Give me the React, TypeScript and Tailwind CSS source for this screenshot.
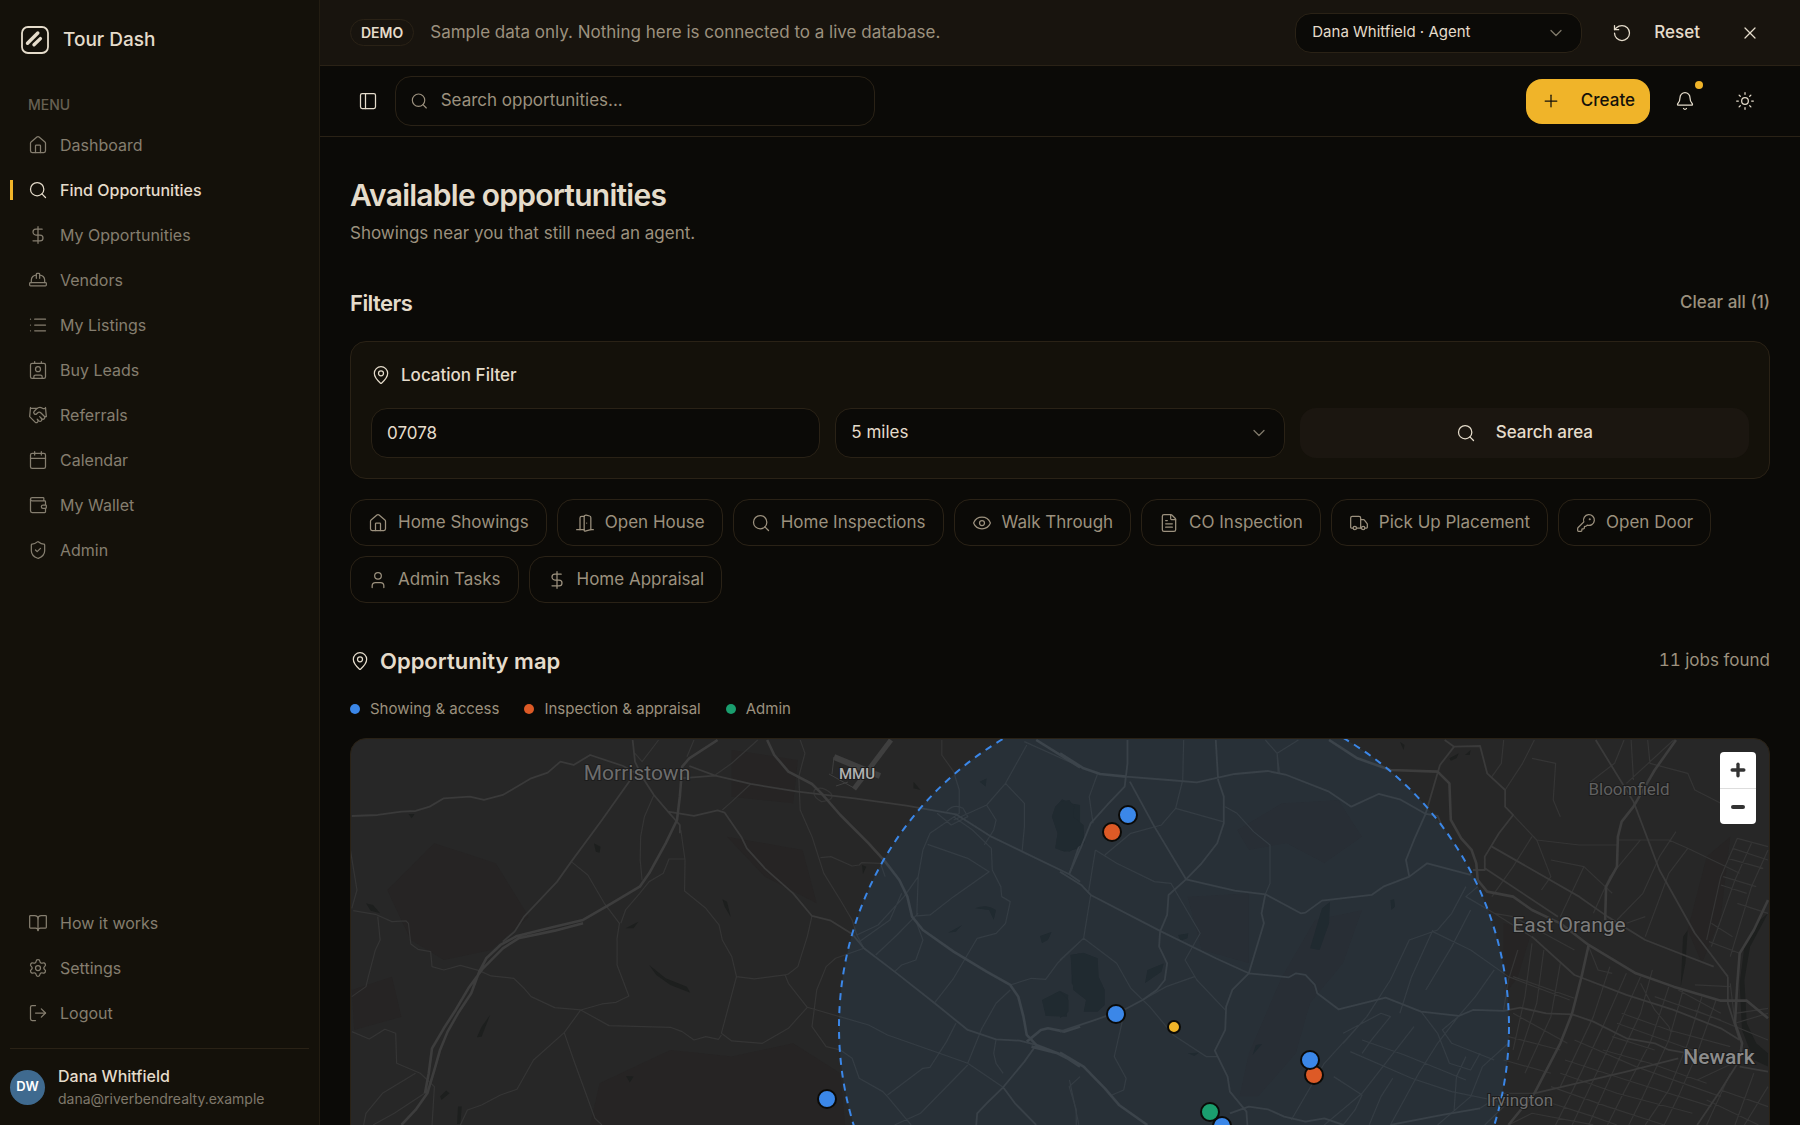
import {
  Bell,
  BookOpen,
  Calendar,
  ChevronDown,
  Contact,
  DollarSign,
  DoorOpen,
  Eye,
  FileText,
  Handshake,
  HardHat,
  House,
  KeyRound,
  List,
  LogOut,
  MapPin,
  PanelLeft,
  Plus,
  RotateCcw,
  Search,
  Settings,
  ShieldCheck,
  Sun,
  Truck,
  User,
  Wallet,
  X,
} from "lucide-react";

const menu = [
  { label: "Dashboard", icon: House },
  { label: "Find Opportunities", icon: Search, active: true },
  { label: "My Opportunities", icon: DollarSign },
  { label: "Vendors", icon: HardHat },
  { label: "My Listings", icon: List },
  { label: "Buy Leads", icon: Contact },
  { label: "Referrals", icon: Handshake },
  { label: "Calendar", icon: Calendar },
  { label: "My Wallet", icon: Wallet },
  { label: "Admin", icon: ShieldCheck },
];

const footerMenu = [
  { label: "How it works", icon: BookOpen },
  { label: "Settings", icon: Settings },
  { label: "Logout", icon: LogOut },
];

const jobTypes = [
  { label: "Home Showings", icon: House },
  { label: "Open House", icon: DoorOpen },
  { label: "Home Inspections", icon: Search },
  { label: "Walk Through", icon: Eye },
  { label: "CO Inspection", icon: FileText },
  { label: "Pick Up Placement", icon: Truck },
  { label: "Open Door", icon: KeyRound },
  { label: "Admin Tasks", icon: User },
  { label: "Home Appraisal", icon: DollarSign },
];

const legend = [
  { label: "Showing & access", dot: "bg-[#3b87e8]" },
  { label: "Inspection & appraisal", dot: "bg-[#dd5a26]" },
  { label: "Admin", dot: "bg-[#1a9e6e]" },
];

const markers = [
  { x: 777, y: 76, color: "#3b87e8" },
  { x: 761, y: 93, color: "#dd5a26" },
  { x: 765, y: 275, color: "#3b87e8" },
  { x: 963, y: 336, color: "#dd5a26" },
  { x: 959, y: 321, color: "#3b87e8" },
  { x: 871, y: 387, color: "#3b87e8" },
  { x: 859, y: 373, color: "#1a9e6e" },
  { x: 476, y: 360, color: "#3b87e8" },
];

const places = [
  { name: "Morristown", x: 286, y: 41, size: 21, weight: 400, color: "#6d6d6d" },
  { name: "MMU", x: 506, y: 40, size: 15, weight: 500, color: "#b0b0b0" },
  { name: "Bloomfield", x: 1278, y: 56, size: 17, weight: 400, color: "#606060" },
  { name: "East Orange", x: 1218, y: 193, size: 21, weight: 400, color: "#7c7c7c" },
  { name: "Newark", x: 1368, y: 325, size: 21, weight: 500, color: "#8c8c8c" },
  { name: "Irvington", x: 1169, y: 367, size: 17, weight: 400, color: "#6d6d6d" },
];

// Roads are stored per map tile, in the tile's own 1568 x 1485 grid.
const westMajor = [
  "M800 330L740 385L725 410L720 500L714 570L690 640L655 730L635 770L570 825L515 870L450 892L375 918L340 945L310 985L295 1025L278 1090L250 1150L228 1205L212 1260L200 1320L185 1390L160 1440L130 1485",
  "M515 880L455 902L378 925L345 955L303 1015L272 1075L245 1140L220 1195L195 1255L188 1330L180 1390",
  "M905 330L920 375L950 425L1000 462L1020 490L1060 555L1120 640L1155 695L1185 750L1202 800L1212 860L1235 900L1300 965L1370 1025L1420 1065L1437 1100L1448 1160L1455 1215L1475 1245L1530 1275L1568 1310",
  "M1475 330L1568 412",
  "M1455 1235L1485 1200L1500 1195L1535 1205L1568 1190",
  "M1465 1250L1520 1270L1568 1305",
];

const westRoads = [
  "M615 450L555 570L490 695L460 755L390 860L370 905L345 935",
  "M25 558L80 555L130 545L160 543L190 530L220 505L275 500L305 510L345 495L405 445L440 428L467 395L495 405L530 375L600 408L640 440",
  "M620 330L625 395L640 440L665 495L695 545L720 585L720 610",
  "M740 408L795 437L870 462L970 485L1090 505L1200 527L1305 553L1380 620L1450 668L1545 733L1568 755",
  "M695 545L750 558L800 541L815 548L850 620L862 655L900 715L960 790L1000 858L1040 872L1085 912L1110 955L1175 1025L1260 1120L1330 1200L1390 1228L1440 1232L1475 1245",
  "M1475 1245L1450 1295L1405 1372L1370 1420L1350 1450L1348 1485M1405 1372L1430 1420L1475 1485",
  "M1545 733L1568 640",
  "M720 445L795 437",
];

const westMinor = [
  "M722 600L731 690L730 783L775 835L803 885L810 930L830 980L840 1040L825 1120L808 1210L830 1233L895 1240L950 1195L990 1132L950 1060L943 1035L878 1047L840 1040",
  "M1000 858L990 920L970 1010L950 1032L943 1035",
  "M490 695L525 735L560 820L592 880L587 925L587 1005L612 1098L585 1117L555 1122L510 1140L570 1187L700 1192L725 1205L750 1230L775 1220L802 1228L808 1215",
  "M510 1140L455 1133L405 1100L390 1075L368 1045L320 1038L295 1022L255 1006L220 1020L195 1010L192 965L165 958L150 942L145 880L140 873L110 875L75 853L28 842",
  "M510 1140L475 1208L410 1290L375 1378L340 1395L300 1425L270 1440L255 1485",
  "M475 1208L495 1290L540 1465L555 1485",
  "M22 660L36 780L25 835M80 860L85 930L75 960L60 1040L55 1070L25 1100",
  "M25 1205L62 1227L95 1198L118 1210L120 1300L170 1330L200 1370L195 1485M160 1330L90 1390L55 1450L50 1485M185 1385L115 1450L70 1485",
  "M885 330L830 400L795 435M870 462L830 515L810 540",
  "M675 330L640 395L625 370M750 330L735 380",
  "M665 495L645 560L637 620L636 690L640 750M635 790L655 755L685 730L697 687L730 687M635 790L605 840L595 880",
  "M975 330L985 370L972 440L975 540L1000 620L1025 730L1060 810L1085 870L1095 915L1110 955",
  "M1018 683L1040 680L1085 708L1100 705L1105 698L1145 700L1155 740",
  "M1110 955L1050 985L1030 1010L1010 1080L1000 1190L1030 1250L1060 1260L1085 1285L1100 1345L1150 1385L1160 1400L1210 1485",
  "M990 1132L1120 1185L1160 1215L1240 1255L1330 1300L1405 1372",
  "M1275 330L1275 375L1300 425L1312 480L1312 550L1250 610L1235 660L1225 740L1195 800L1140 885L1095 915",
  "M1160 1395L1235 1315L1250 1312L1285 1235L1305 1180",
  "M1390 1228L1385 1270L1390 1300L1405 1330",
  "M1225 740L1222 858L1250 855L1300 800L1375 725L1330 685L1245 643",
  "M1300 570L1370 525L1410 460L1455 345M1410 460L1450 520L1450 590L1445 665",
  "M1370 525L1390 570L1385 600L1365 645",
  "M1175 1025L1190 1005L1220 990L1235 930L1222 880M1135 975L1180 915L1225 850M1100 935L1165 870L1190 790",
  "M1300 560L1340 600L1380 655L1382 720L1400 770L1402 800L1420 815L1410 880L1390 910L1350 925L1325 985L1300 1045L1260 1118",
  "M1420 1065L1465 1045L1495 1048L1520 1000L1568 935M1420 1080L1390 1120L1360 1195L1330 1300",
  "M1568 1340L1545 1370L1560 1440L1560 1485M1175 1485L1230 1450L1330 1305",
  "M1450 335L1568 410",
  "M1005 480Q1020 465 1040 490Q1050 510 1020 515Q1000 500 1005 480",
  "M1285 545Q1300 520 1320 535L1330 560L1295 585L1265 550",
];

const westWater = [
  "M1515 530L1530 508L1548 520L1568 525L1568 655L1535 665L1515 655L1520 610L1508 560Z",
  "M1487 1110L1525 1082L1543 1095L1540 1160L1495 1158Z",
  "M1568 970L1550 975L1550 1060L1568 1090Z",
  "M318 1155L300 1190L290 1222L300 1220Z",
  "M538 640L552 650L550 668L542 665Z",
  "M655 1005L690 1045L735 1070L742 1088L700 1065L670 1035Z",
  "M55 820L70 825L85 850L65 842Z",
  "M810 808L820 815L828 862L815 830Z",
  "M606 1338L622 1340L614 1358Z",
  "M1288 908L1318 885L1305 905Z",
  "M1483 918L1508 905L1500 930L1487 940Z",
  "M1345 835Q1370 820 1390 840L1385 870L1375 840Z",
  "M1355 455L1370 445L1368 470Z",
  "M1215 455L1230 480L1215 475Z",
  "M605 895L632 875L622 895Z",
  "M145 552L158 552L152 565Z",
  "M212 1400L225 1382L232 1390L215 1410Z",
  "M250 1430L258 1430L255 1482L248 1482Z",
  "M1106 705L1115 710L1108 732Z",
];

const westPatches = [
  "M200 640L330 700L400 860L320 960L220 990L150 930L100 780Z",
  "M550 1360L700 1260L830 1280L960 1240L1060 1330L1070 1485L530 1485Z",
  "M830 360L970 390L960 520L830 500Z",
  "M820 620L980 660L1010 820L900 740Z",
  "M25 1080L110 1040L130 1160L30 1200Z",
];

const eastMajor = [
  "M0 370L50 415L85 432L140 440",
  "M570 330L630 385L700 420L800 425L825 460L828 570L850 625L872 660L882 700L885 750L905 785L960 800L1000 840L1060 880L1120 945L1220 1030L1300 1070L1400 1112L1455 1112L1500 1165",
  "M1305 330L1260 420L1215 530L1190 575L1182 620L1180 710L1157 770L1155 870",
  "M1120 945L1105 1040L1085 1150L1060 1240L1005 1390L950 1485",
  "M0 1268L50 1310L95 1375L125 1425L185 1485",
  "M1500 810L1470 900L1440 970L1435 1060L1430 1180L1445 1240L1440 1290",
];

const eastRoads = [
  "M140 440L230 450L290 457L370 432L440 423L480 435L570 485L617 530L675 492L720 508L775 552L800 558L810 590",
  "M143 330L143 400L137 470L100 525L65 580L45 650L20 730",
  "M330 330L335 450L347 500L347 580L333 640L300 700L267 748L230 795L227 855L212 905L210 950L227 1000L222 1050L205 1080L175 1110L135 1140L70 1172L0 1205",
  "M148 455L200 590L267 748L370 782L435 793L510 850L520 848L555 812L660 795L685 770L740 740L778 700L870 735",
  "M0 725L45 765L65 795L215 905L330 985L400 1030L485 1042L500 1030L520 1035L540 1065L545 1090L590 1138L690 1103L765 1145L845 1158L875 1140L940 1143L975 1133L1030 1150L1085 1153L1130 1175L1200 1225L1260 1240L1290 1260L1350 1275",
  "M435 793L427 850L432 880L400 1030L365 1080L352 1130L350 1200L328 1262L355 1340L360 1385L395 1445L397 1485",
  "M835 350L890 348L905 430L943 480L943 530L960 555L930 610L900 680L900 720L875 720M835 350L805 405L775 550L750 630L733 690L740 740",
  "M1135 330L1215 515L1270 720L1345 910L1415 1040",
  "M915 650L1020 735L1100 800L1160 860L1240 930L1385 1010M900 715L1055 860",
  "M1000 920L1090 1035L1200 1095L1300 1140L1400 1195L1440 1230",
  "M1005 1390L1200 1325L1310 1285",
  "M700 1485L810 1455L890 1435M360 1450L400 1430L440 1438L475 1460L520 1475L560 1465L600 1485",
  "M1440 1290L1400 1380L1350 1485M1440 1310L1500 1325",
  "M1415 1040L1415 1120L1440 1230",
  "M815 330L835 350",
];

const eastMinor = [
  "M350 530L375 550L410 605L445 645L445 760L435 793M245 535L345 575M75 660L120 700L200 755L235 760L297 910L265 990L290 1050L350 1140",
  "M95 675L150 610L215 585L245 535L260 450L262 330M80 430L62 500L70 580M75 660L60 790",
  "M65 795L50 925L120 1000L150 1075L190 1130L240 1215L310 1280L333 1280M175 1110L225 1070L285 1040M50 925L0 990",
  "M135 1155L115 1280L140 1345L135 1380L110 1395M20 1350L40 1485",
  "M460 370L465 430M460 370L505 330M460 370L435 330M460 370L462 430",
  "M860 770L830 850L800 900L740 930L700 1050L650 1160L560 1300L490 1470M885 770L860 800L920 850L1010 930",
  "M790 905L870 960L950 1040L1080 1110M920 1020L880 1100L845 1158L800 1240L760 1330L700 1485",
  "M600 1210L680 1150L700 1160L660 1230L640 1270M615 1265L745 1345L830 1385L950 1420M640 1230L730 1275L860 1350",
  "M765 1145L800 1210L825 1300L870 1320L890 1270M845 1158L810 1200L830 1240L920 1290",
  "M580 1340L640 1395L625 1440L600 1485M705 1345L680 1400L655 1485M860 1280L840 1340L835 1440",
  "M775 1080L830 950L870 840M720 1150L745 1040L790 900M650 1160L600 1240",
  "M940 330L935 400L915 440M1005 330L980 400L943 480M1000 385L1050 400L1045 510L1060 560",
  "M1195 330L1175 400L1120 460M1245 330L1250 400L1330 430L1345 480L1400 520M1210 330L1215 450",
  "M1180 630L1290 630L1330 655L1440 730M1180 645L1100 645L1010 630M1305 605L1270 680L1235 790L1180 870",
  "M960 555L1010 630L1040 740L1020 780M1040 690L1110 710L1170 790M1000 620L960 710L915 800",
  "M1330 655L1290 730L1240 920M1110 710L1060 860M1240 860L1200 880M1230 630L1165 740L1130 850",
  "M1435 625L1400 740L1370 930M1465 640L1430 750L1380 950M1500 660L1465 770L1420 980M1435 625L1500 650M1425 655L1500 690M1415 685L1490 715",
  "M1405 740L1475 770M1400 765L1455 790M1435 820L1500 850M1380 880L1425 920M1375 935L1440 970M1300 330L1200 460",
  "M920 850L960 860L1090 960M970 960L950 1050L940 1140M1000 940L985 1100L960 1260M1025 960L1010 1120L970 1290M1060 1000L1040 1160L985 1330",
  "M960 1040L1090 1105M960 1150L1075 1240M950 1220L1060 1260M940 1290L1040 1330M1120 950L1140 1020L1170 1030",
  "M1230 1040L1180 1200L1120 1380L1085 1485M1200 1030L1150 1190L1090 1370L1050 1485M1255 1020L1230 1150L1170 1330L1120 1485M1165 1010L1130 1160L1060 1370",
  "M1290 1070L1250 1240L1190 1400L1160 1485M1320 1080L1290 1230L1235 1400L1205 1485M1360 1100L1330 1240L1290 1380L1240 1485M1390 1110L1350 1270L1310 1400L1280 1485",
  "M1190 1150L1290 1200L1420 1250M1180 1180L1280 1230L1400 1290M1170 1220L1260 1260M1150 1260L1250 1300L1370 1360M1090 1230L1220 1310L1400 1400",
  "M1070 1290L1200 1350L1380 1430M1060 1330L1180 1390L1340 1450M1040 1370L1160 1430L1280 1485M1020 1410L1130 1460L1180 1485M1310 1080L1400 1150M1345 1065L1420 1070M1260 1100L1400 1170",
  "M1230 1060L1260 1140L1290 1190L1295 1210M1400 1380L1500 1430M1370 1410L1480 1485M1420 1330L1370 1485M1470 1330L1430 1485M1500 1370L1450 1485",
  "M1430 1180L1500 1150M1430 1150L1500 1135M1420 1060L1430 1180M1440 1290L1350 1350M1345 1140L1500 1230",
  "M890 1435L940 1390L1005 1390M800 1485L870 1400L895 1310L950 1240M900 1485L940 1430M950 1485L1000 1450L1130 1485M560 1485L640 1390L750 1190",
];

const eastWater = [
  "M0 515L20 510L30 530L28 560L50 585L52 640L20 665L0 660Z",
  "M22 975L50 968L80 985L82 1040L95 1080L95 1125L80 1145L50 1145L55 1110L28 1080Z",
  "M0 1085L18 1110L18 1145L0 1165Z",
  "M555 835L572 815L570 880L550 960L530 955Z",
  "M700 810L708 808L710 830L702 840Z",
  "M180 1060L185 1020L220 1000L215 1025Z",
  "M250 915L272 910L270 925L255 932Z",
  "M408 1275L415 1245L428 1242Z",
  "M270 1270L295 1268L285 1278Z",
  "M825 385L845 370L840 385L828 392ZM858 375L870 360L868 375Z",
  "M1320 920L1330 900L1325 1000L1315 1070Z",
  "M1500 850L1462 950L1450 1050L1455 1180L1475 1240L1500 1270L1500 1310L1470 1290L1445 1200L1440 1060L1450 950L1475 880Z",
  "M720 335L730 345L728 360Z",
];

const eastPatches = [
  "M375 600L470 520L590 510L640 620L560 700L480 640L400 660Z",
  "M270 800L400 790L400 1000L300 960Z",
  "M470 1040L540 870L640 840L600 1000L530 1120L500 1270L420 1400L380 1400L400 1270Z",
  "M940 880L1000 900L970 1040L940 1100Z",
  "M1370 680L1420 620L1400 860L1360 1000L1330 900Z",
];

type Tile = {
  transform: string;
  patches: string[];
  water: string[];
  minor: string[];
  roads: string[];
  major: string[];
};

function MapTile({ transform, patches, water, minor, roads, major }: Tile) {
  return (
    <g transform={transform} strokeLinejoin="round">
      <path d={patches.join("")} fill="#262424" />
      <path d={water.join("")} fill="#1d1f1e" />
      <g fill="none">
        <path
          d={minor.join("")}
          stroke="#353535"
          strokeWidth="1.2"
          vectorEffect="non-scaling-stroke"
        />
        <path
          d={roads.join("")}
          stroke="#3a3a3a"
          strokeWidth="1.8"
          vectorEffect="non-scaling-stroke"
        />
        <path
          d={major.join("")}
          stroke="#3d3d3d"
          strokeWidth="2.6"
          vectorEffect="non-scaling-stroke"
        />
      </g>
    </g>
  );
}

function OpportunityMap() {
  return (
    <div className="relative h-[600px] overflow-hidden rounded-2xl border border-[#2a2216] bg-[#272727]">
      <svg
        className="h-full w-full"
        viewBox="0 0 1418 598"
        preserveAspectRatio="xMidYMin slice"
        role="img"
        aria-label="Map of opportunities around 07078"
      >
        <MapTile
          transform="translate(-11 -109) scale(0.472 0.3333)"
          patches={westPatches}
          water={westWater}
          minor={westMinor}
          roads={westRoads}
          major={westMajor}
        />
        <MapTile
          transform="translate(709 -109) scale(0.472 0.3333)"
          patches={eastPatches}
          water={eastWater}
          minor={eastMinor}
          roads={eastRoads}
          major={eastMajor}
        />
        {/* Airport runways */}
        <g stroke="#3f3f3f" fill="none">
          <path d="M540 1L503 50" strokeWidth="5" />
          <path d="M483 18L529 37" strokeWidth="6" />
          <path d="M483 18L481 35M478 35L503 49M485 47L497 43" />
        </g>
        {/* Search radius */}
        <circle
          cx="823"
          cy="288"
          r="335"
          fill="#3973a8"
          fillOpacity="0.13"
          stroke="#3b87e8"
          strokeWidth="2"
          strokeDasharray="7 6"
        />
        {places.map((p) => (
          <text
            key={p.name}
            x={p.x}
            y={p.y}
            textAnchor="middle"
            fontSize={p.size}
            fontWeight={p.weight}
            fill={p.color}
            stroke="#1c1c1c"
            strokeWidth="2"
            paintOrder="stroke"
            className="font-['Roboto',sans-serif]"
          >
            {p.name}
          </text>
        ))}
        {markers.map((m) => (
          <circle
            key={`${m.x}-${m.y}`}
            cx={m.x}
            cy={m.y}
            r="9"
            fill={m.color}
            stroke="#0b0a07"
            strokeWidth="2"
          />
        ))}
        <circle cx="823" cy="288" r="6" fill="#f0b429" stroke="#0b0a07" strokeWidth="2" />
      </svg>
      <div className="absolute top-[13px] right-[13px] flex w-9 flex-col overflow-hidden rounded bg-white text-[#333]">
        <button aria-label="Zoom in" className="flex h-9 items-center justify-center">
          <Plus size={20} strokeWidth={4} />
        </button>
        <button
          aria-label="Zoom out"
          className="flex h-9 items-center justify-center border-t border-[#ddd]"
        >
          <span className="h-1 w-[14px] rounded-full bg-[#333]" />
        </button>
      </div>
    </div>
  );
}

function NavItem({ label, icon: Icon, active }: (typeof menu)[number]) {
  return (
    <a
      href="#"
      aria-current={active ? "page" : undefined}
      className={
        active
          ? "relative flex h-[45px] items-center gap-3 px-7 font-medium text-[#e5dccb]"
          : "relative flex h-[45px] items-center gap-3 px-7 text-[#857e6f]"
      }
    >
      {active && <span className="absolute left-[10px] h-5 w-[3px] bg-[#f0b429]" />}
      <Icon size={20} strokeWidth={1.5} />
      {label}
    </a>
  );
}

function Sidebar() {
  return (
    <aside className="flex w-80 shrink-0 flex-col border-r border-[#231d12] bg-[#14110a] text-base">
      <div className="flex items-center gap-[14px] px-[21px] pt-[26px] text-[19px] leading-7 font-medium text-[#e5dccb]">
        <svg width="28" height="28" viewBox="0 0 28 28" fill="none" stroke="currentColor">
          <rect x="1" y="1" width="26" height="26" rx="6" strokeWidth="1.8" />
          <path d="M6.5 17.2L16.8 7" strokeWidth="3.4" strokeLinecap="round" />
          <path d="M13 18.8L19.4 12.6" strokeWidth="3.4" strokeLinecap="round" />
        </svg>
        Tour Dash
      </div>
      <p className="mt-[41px] px-7 text-sm leading-5 font-medium text-[#676052]">MENU</p>
      <nav className="mt-[7px] flex flex-col">
        {menu.map((item) => (
          <NavItem key={item.label} {...item} />
        ))}
      </nav>
      <nav className="mt-auto flex flex-col">
        {footerMenu.map((item) => (
          <NavItem key={item.label} {...item} />
        ))}
      </nav>
      <div className="mx-[10px] mt-[13px] flex items-center gap-[13px] border-t border-[#2a2216] py-[15px]">
        <span className="flex h-[35px] w-[35px] items-center justify-center rounded-full bg-[#3f6a8f] text-[13px] font-semibold text-white">
          DW
        </span>
        <div>
          <p className="leading-6 font-medium text-[#e5dccb]">Dana Whitfield</p>
          <p className="text-sm leading-[22px] text-[#7f786a]">dana@riverbendrealty.example</p>
        </div>
      </div>
    </aside>
  );
}

export default function App() {
  return (
    <div className="flex h-screen bg-[#0b0a07] font-['Inter',sans-serif] text-[17px] text-[#e5dccb]">
      <Sidebar />
      <div className="flex min-w-0 flex-1 flex-col">
        {/* Demo banner */}
        <div className="flex h-[66px] shrink-0 items-center border-b border-[#2a2216] bg-[#18140e] px-[30px]">
          <span className="rounded-full border border-[#2a2216] px-[10px] text-sm leading-[25px] font-semibold">
            DEMO
          </span>
          <p className="ml-4 text-[#9c917e]">
            Sample data only. Nothing here is connected to a live database.
          </p>
          <div className="relative ml-auto w-[287px]">
            <select
              aria-label="Demo account"
              className="h-10 w-full appearance-none rounded-2xl border border-[#2a2216] bg-[#0b0a07] px-4 text-[15px]"
            >
              <option>Dana Whitfield · Agent</option>
            </select>
            <ChevronDown
              size={20}
              strokeWidth={1.5}
              className="pointer-events-none absolute top-[10px] right-4 text-[#7f786a]"
            />
          </div>
          <button className="ml-[30px] flex items-center gap-[22px] font-medium">
            <RotateCcw size={20} strokeWidth={1.5} />
            Reset
          </button>
          <button aria-label="Dismiss banner" className="ml-10 pr-[10px]">
            <X size={20} strokeWidth={1.5} />
          </button>
        </div>

        {/* Top bar */}
        <header className="flex h-[71px] shrink-0 items-center border-b border-[#2a2216] px-[30px]">
          <button aria-label="Toggle sidebar" className="flex w-[35px] justify-center">
            <PanelLeft size={20} strokeWidth={1.5} />
          </button>
          <label className="ml-[10px] flex h-[50px] w-[480px] items-center gap-3 rounded-2xl border border-[#2a2216] px-[14px] text-[#9c917e]">
            <Search size={20} strokeWidth={1.5} />
            <input
              type="search"
              aria-label="Search opportunities"
              placeholder="Search opportunities..."
              className="w-full bg-transparent outline-none placeholder:text-[#9c917e]"
            />
          </label>
          <button className="ml-auto flex h-[45px] items-center gap-5 rounded-2xl bg-[#f0b429] px-[15px] font-medium text-[#14110a]">
            <Plus size={20} strokeWidth={1.5} />
            Create
          </button>
          <button
            aria-label="Notifications"
            className="relative ml-[10px] flex h-[45px] w-[50px] items-center justify-center"
          >
            <Bell size={20} strokeWidth={1.5} />
            <span className="absolute top-[2px] right-[7px] h-2 w-2 rounded-full bg-[#f0b429]" />
          </button>
          <button
            aria-label="Toggle theme"
            className="ml-[10px] flex h-[45px] w-[50px] items-center justify-center"
          >
            <Sun size={20} strokeWidth={1.5} />
          </button>
        </header>

        <main className="flex-1 overflow-y-auto px-[30px] pt-[38px] pb-10 [scrollbar-width:none]">
          <h1 className="text-[30px] leading-10 font-semibold tracking-tight">
            Available opportunities
          </h1>
          <p className="mt-1 leading-7 text-[#9c917e]">
            Showings near you that still need an agent.
          </p>

          <div className="mt-10 flex items-center justify-between">
            <h2 className="text-[22px] leading-8 font-semibold tracking-tight">Filters</h2>
            <button className="font-medium text-[#9c917e]">Clear all (1)</button>
          </div>

          <section className="mt-[22px] rounded-2xl border border-[#2a2216] bg-[#14110a] p-5">
            <h3 className="flex items-center gap-[10px] leading-[26px] font-medium">
              <MapPin size={20} strokeWidth={1.5} />
              Location Filter
            </h3>
            <div className="mt-5 grid grid-cols-3 gap-[15px]">
              <input
                type="text"
                aria-label="ZIP code"
                defaultValue="07078"
                className="h-[50px] rounded-2xl border border-[#2a2216] bg-[#0b0a07] px-[15px] outline-none"
              />
              <div className="relative">
                <select
                  aria-label="Radius"
                  className="h-[50px] w-full appearance-none rounded-2xl border border-[#2a2216] bg-[#0b0a07] px-[15px]"
                >
                  <option>5 miles</option>
                </select>
                <ChevronDown
                  size={20}
                  strokeWidth={1.5}
                  className="pointer-events-none absolute top-[15px] right-4 text-[#7f786a]"
                />
              </div>
              <button className="flex h-[50px] items-center justify-center gap-5 rounded-2xl bg-[#1b1610] font-medium">
                <Search size={20} strokeWidth={1.5} />
                Search area
              </button>
            </div>
          </section>

          <div className="mt-5 flex flex-wrap gap-[10px]">
            {jobTypes.map(({ label, icon: Icon }) => (
              <button
                key={label}
                className="flex h-[47px] items-center gap-[10px] rounded-2xl border border-[#2a2216] px-[17px] text-[#9c917e]"
              >
                <Icon size={20} strokeWidth={1.5} />
                {label}
              </button>
            ))}
          </div>

          <div className="mt-[42px] flex items-center justify-between">
            <h2 className="flex items-center gap-[10px] text-[22px] leading-8 font-semibold">
              <MapPin size={20} strokeWidth={1.5} />
              Opportunity map
            </h2>
            <p className="text-[#9c917e] tabular-nums">11 jobs found</p>
          </div>
          <ul className="mt-5 mb-[17px] flex gap-[25px] text-[15px] leading-6 text-[#9c917e]">
            {legend.map((item) => (
              <li key={item.label} className="flex items-center gap-[10px]">
                <span className={`h-[10px] w-[10px] rounded-full ${item.dot}`} />
                {item.label}
              </li>
            ))}
          </ul>
          <OpportunityMap />
        </main>
      </div>
    </div>
  );
}
